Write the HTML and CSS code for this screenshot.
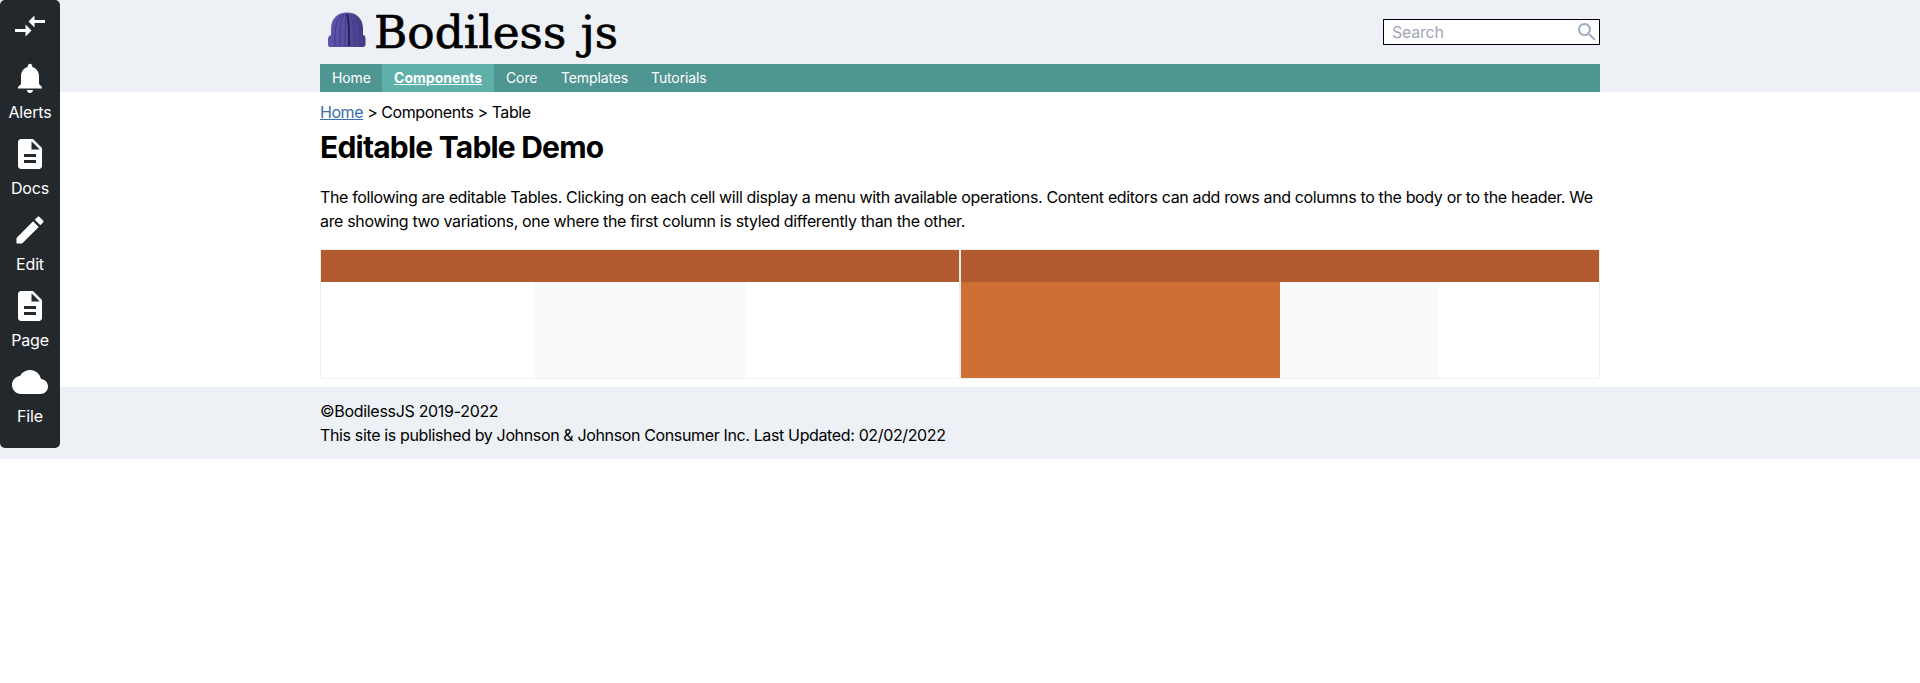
FILE: index.html
```
<!DOCTYPE html>
<html lang="en">
<head>
<meta charset="utf-8">
<title>Editable Table Demo</title>
<link rel="stylesheet" href="styles.css">
</head>
<body>
<aside class="toolbar">
  <div class="tool tool-switch"><svg class="tool-icon" viewBox="0 0 24 24"><path d="M9.01 14H2v2h7.01v3L13 15l-3.99-4v3zm5.98-1v-3H22V8h-7.01V5L11 9l3.99 4z"/></svg></div>
  <div class="tool"><svg class="tool-icon" viewBox="0 0 24 24"><path d="M12 22c1.1 0 2-.9 2-2h-4c0 1.100.890 2 2 2zm6-6v-5c0-3.070-1.640-5.640-4.500-6.320V4c0-.830-.670-1.500-1.500-1.500s-1.500.670-1.500 1.500v.680C7.630 5.360 6 7.920 6 11v5l-2 2v1h16v-1l-2-2z"/></svg><span>Alerts</span></div>
  <div class="tool"><svg class="tool-icon" viewBox="0 0 24 24"><path d="M14 2H6c-1.100 0-1.990.900-1.990 2L4 20c0 1.100.890 2 1.990 2H18c1.100 0 2-.900 2-2V8l-6-6zm2 16H8v-2h8v2zm0-4H8v-2h8v2zm-3-5V3.500L18.500 9H13z"/></svg><span>Docs</span></div>
  <div class="tool"><svg class="tool-icon" viewBox="0 0 24 24"><path d="M3 17.250V21h3.750L17.810 9.940l-3.750-3.750L3 17.250zM20.710 7.040c.390-.390.390-1.020 0-1.410l-2.340-2.340c-.390-.390-1.020-.390-1.410 0l-1.830 1.830 3.750 3.750 1.830-1.830z"/></svg><span>Edit</span></div>
  <div class="tool"><svg class="tool-icon" viewBox="0 0 24 24"><path d="M14 2H6c-1.100 0-1.990.900-1.990 2L4 20c0 1.100.890 2 1.990 2H18c1.100 0 2-.900 2-2V8l-6-6zm2 16H8v-2h8v2zm0-4H8v-2h8v2zm-3-5V3.500L18.500 9H13z"/></svg><span>Page</span></div>
  <div class="tool"><svg class="tool-icon" viewBox="0 0 24 24"><path d="M19.350 10.040C18.670 6.590 15.640 4 12 4 9.110 4 6.600 5.640 5.350 8.040 2.340 8.360 0 10.910 0 14c0 3.310 2.690 6 6 6h13c2.760 0 5-2.240 5-5 0-2.640-2.050-4.780-4.650-4.960z"/></svg><span>File</span></div>
</aside>
<header class="header">
  <div class="container">
    <div class="brand-row">
      <svg class="logo" width="304" height="64" viewBox="0 0 304 64">
        <defs><linearGradient id="wool"><stop offset="0" stop-color="#5f54ab"/><stop offset=".45" stop-color="#5a4fa5"/><stop offset="1" stop-color="#443982"/></linearGradient></defs>
        <path fill="url(#wool)" d="M11 36V29C11 18 18 12.500 27 12.500S43 18 43 29V36Z"/>
        <path fill="url(#wool)" d="M11 35Q14 33 16 35Q19 33 22 35Q25 33 28 35Q31 33 34 35Q37 33 40 35Q45 34 45.500 38V45Q45 47 43 47H10Q8 47 8 44V39Q8 36 11 35Z"/>
        <path class="rib" d="M15 46V36C15 26 17 19 22 15M20 46V35C20 25 21 20 24 14M25 46V35C25 25 26 20 26 14M34 46V35C34 25 33 19 29 14M40 46V36C40 27 38 20 33 15"/>
        <path class="rib rib-dark" d="M29 46V35C29 25 29 20 27 14"/>
        <text class="logo-text" x="54" y="47.500" textLength="244" lengthAdjust="spacingAndGlyphs">Bodiless js</text>
      </svg>
      <div class="search"><input class="search-input" placeholder="Search" aria-label="Search"><svg class="search-icon" viewBox="0 0 24 24"><path d="M15.500 14h-.790l-.280-.270C15.410 12.590 16 11.110 16 9.500 16 5.910 13.090 3 9.500 3S3 5.910 3 9.500 5.910 16 9.500 16c1.610 0 3.090-.590 4.230-1.570l.270.280v.790l5 4.990L20.490 19l-4.990-5zm-6 0C7.010 14 5 11.990 5 9.500S7.010 5 9.500 5 14 7.010 14 9.500 11.990 14 9.500 14z"/></svg></div>
    </div>
    <nav class="nav">
      <a class="nav-item nav-home">Home</a>
      <a class="nav-item nav-active">Components</a>
      <a class="nav-item nav-core">Core</a>
      <a class="nav-item nav-templates">Templates</a>
      <a class="nav-item">Tutorials</a>
    </nav>
  </div>
</header>
<main class="container main">
  <div class="breadcrumbs"><a class="link">Home</a> &gt; Components &gt; Table</div>
  <h1 class="title">Editable Table Demo</h1>
  <p class="intro"><span class="intro-first">The following are editable Tables. Clicking on each cell will display a menu with available operations. Content editors can add rows and columns to the body or to the header. We</span><br>are showing two variations, one where the first column is styled differently than the other.</p>
  <div class="tables">
    <div class="table">
      <div class="table-head"></div>
      <div class="table-body thirds"><div></div><div class="shade"></div><div></div></div>
    </div>
    <div class="table">
      <div class="table-head"></div>
      <div class="table-body halves"><div class="accent"></div><div class="shade"></div><div></div></div>
    </div>
  </div>
</main>
<footer class="footer">
  <div class="container">
    <div class="copyright">©BodilessJS 2019-2022</div>
    <div class="publisher">This site is published by Johnson &amp; Johnson Consumer Inc. Last Updated: 02/02/2022</div>
  </div>
</footer>
</body>
</html>
```
FILE: styles.css
```
* { box-sizing: border-box; }
body { margin: 0; background: #fff; color: #000; font: 16px/24px Inter, "Liberation Sans", sans-serif; letter-spacing: -0.34px; }
.container { width: 1280px; margin: 0 auto; }
.toolbar { position: fixed; left: 0; top: 0; width: 60px; height: 448px; padding-top: 8px; border-radius: 5px; background: #23282d; color: #fff; }
.tool { display: flex; flex-direction: column; align-items: center; height: 76px; gap: 4px; letter-spacing: -0.15px; }
.tool-switch { height: 52px; }
.tool-icon { width: 36px; height: 36px; flex: none; fill: #fff; }
.header { height: 92px; background: #edf0f5; }
.brand-row { display: flex; justify-content: space-between; align-items: center; height: 64px; }
.logo { display: block; }
.logo-text { font-family: "DejaVu Serif", serif; font-size: 45px; letter-spacing: 0; stroke: #000; stroke-width: 0.7; }
.rib { fill: none; stroke: #453b88; stroke-width: 1; }
.rib-dark { stroke: #292258; stroke-width: 2; }
.search { display: flex; align-items: center; width: 217px; height: 26px; border: 1px solid #000; background: #fff; }
.search-input { flex: 1; min-width: 0; height: 24px; padding: 0 8px; border: 0; outline: 0; background: transparent; font: inherit; letter-spacing: -0.25px; }
.search-input::placeholder { color: #a0a7b5; opacity: 1; }
.search-icon { width: 24px; height: 24px; fill: #a0aec0; }
.nav { display: flex; height: 28px; background: #4f9592; color: #fff; font-size: 14px; line-height: 28px; letter-spacing: -0.12px; }
.nav-item { padding: 0 12px; }
.nav-home { width: 62px; }
.nav-active { width: 112px; background: #5fafaa; font-weight: 700; text-decoration: underline; letter-spacing: 0.03px; }
.nav-core { width: 55px; }
.nav-templates { width: 90px; }
.main { padding: 8px 0; }
.breadcrumbs { letter-spacing: -0.44px; }
.link { color: #3b6cb0; text-decoration: underline; }
.title { height: 48px; margin: 0 0 13px; font-size: 30px; line-height: 47px; font-weight: 700; letter-spacing: -0.79px; }
.intro { margin: 0 0 16px; }
.intro-first { white-space: nowrap; letter-spacing: -0.355px; }
.tables { display: flex; height: 130px; }
.table { flex: 1; border: 1px solid #edf0f5; }
.table-head { height: 32px; background: #b35a2e; }
.table-body { display: grid; height: 96px; }
.thirds { grid-template-columns: repeat(3, 1fr); }
.halves { grid-template-columns: 319px 159px 1fr; }
.shade { background: #f8fafc; }
.accent { background: #ce6f33; }
.footer { height: 72px; padding-top: 12px; background: #edf0f5; }
.copyright { letter-spacing: -0.31px; }
.publisher { letter-spacing: -0.36px; }
```
